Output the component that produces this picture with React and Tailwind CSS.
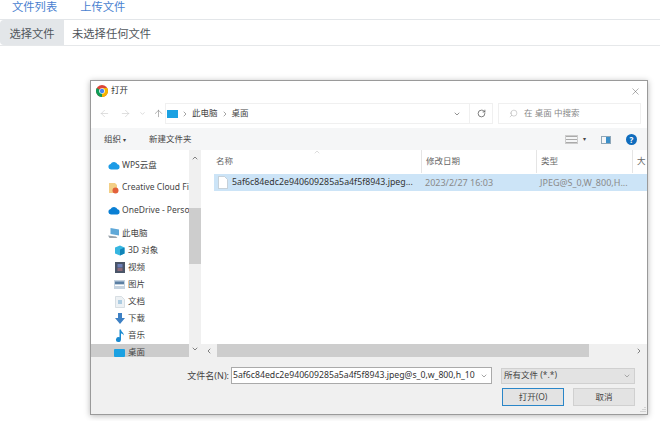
import React from 'react';
import { ArrowLeft, ArrowRight, ArrowUp, ChevronDown, ChevronUp, ChevronLeft, ChevronRight, RotateCw, Search, X } from 'lucide-react';

const font = "font-['Noto_Sans','Noto_Sans_CJK_SC',sans-serif]";

const ChromeIcon = () => (
  <svg width="12" height="12" viewBox="0 0 24 24">
    <circle cx="12" cy="12" r="12" fill="#db4437" />
    <path d="M12 12 L1.6 6 A12 12 0 0 0 12 24 L18 13.5 Z" fill="#0f9d58" />
    <path d="M12 12 L12 24 A12 12 0 0 0 22.4 6 L12 6 Z" fill="#f4b400" />
    <circle cx="12" cy="12" r="5.6" fill="#fff" />
    <circle cx="12" cy="12" r="4.4" fill="#4285f4" />
  </svg>
);

const Cloud = ({ color = '#0a7fd4' }) => (
  <svg width="12" height="9" viewBox="0 0 24 16">
    <path d="M6 16a5.5 5.5 0 0 1-.8-10.9A7.5 7.5 0 0 1 19 5.6 5.3 5.3 0 0 1 19 16Z" fill={color} />
  </svg>
);

const Folder = () => (
  <svg width="11" height="13" viewBox="0 0 22 26">
    <path d="M2 4h12l4 4v16H2Z" fill="#f3cf86" />
    <circle cx="15" cy="19" r="6" fill="#e2603b" />
  </svg>
);

const PcIcon = () => (
  <svg width="13" height="12" viewBox="0 0 26 24">
    <path d="M7 2l17 3v12L7 14Z" fill="#5fa8d8" />
    <path d="M2 17l16 2 3 3H5Z" fill="#9aa3ab" />
  </svg>
);

const Cube = () => (
  <svg width="11" height="11" viewBox="0 0 22 22">
    <path d="M2 5l10-4 9 4v12l-9 4-10-4Z" fill="#37b6e0" />
    <path d="M12 9l9-4v12l-9 4Z" fill="#1184b8" />
  </svg>
);

const Film = () => (
  <svg width="10" height="11" viewBox="0 0 20 22">
    <rect width="20" height="22" fill="#4a5568" />
    <rect x="5" y="4" width="10" height="7" fill="#6d7fb8" />
    <rect x="5" y="12" width="10" height="6" fill="#8d6a78" />
  </svg>
);

const Pic = () => (
  <svg width="11" height="9" viewBox="0 0 22 18">
    <rect width="22" height="18" fill="#c5d3e0" />
    <rect x="2" y="3" width="18" height="5" fill="#5b7fa3" />
    <rect x="2" y="10" width="18" height="2" fill="#fff" />
  </svg>
);

const Doc = () => (
  <svg width="10" height="12" viewBox="0 0 20 24">
    <path d="M1 1h12l6 6v16H1Z" fill="#edf1f4" stroke="#b9c4cc" />
    <path d="M6 10h8M6 14h8" stroke="#6da7cf" strokeWidth="2" />
  </svg>
);

const Down = () => (
  <svg width="10" height="11" viewBox="0 0 20 22">
    <path d="M6 0h8v10h6L10 22 0 10h6Z" fill="#3d80c4" />
  </svg>
);

const Music = () => (
  <svg width="10" height="13" viewBox="0 0 20 26">
    <path d="M9 1h3c0 5 6 6 6 12-2-3-4-4-6-4v12a5 5 0 1 1-3-4.500Z" fill="#1a8ad0" />
  </svg>
);

const Desk = () => <span className="w-[11px] h-[8px] bg-[#1ba1e2] rounded-[1px] block" />;

const FileIcon = () => (
  <svg width="10" height="13" viewBox="0 0 20 26">
    <path d="M1 1h12l6 6v18H1Z" fill="#fff" stroke="#a9b0b6" />
  </svg>
);

const navItems = [
  { label: 'WPS云盘', icon: <Cloud color="#1c9be6" />, cls: 'pl-[16px] h-[26px] pt-[5px]' },
  { label: 'Creative Cloud Fi', icon: <Folder />, cls: 'pl-[16px] h-[23px]' },
  { label: 'OneDrive - Perso', icon: <Cloud />, cls: 'pl-[16px] h-[23px]' },
  { label: '此电脑', icon: <PcIcon />, cls: 'pl-[16px] h-[20px] pt-[2px]' },
  { label: '3D 对象', icon: <Cube />, cls: 'pl-[22px] h-[17px]' },
  { label: '视频', icon: <Film />, cls: 'pl-[22px] h-[17px]' },
  { label: '图片', icon: <Pic />, cls: 'pl-[22px] h-[17px]' },
  { label: '文档', icon: <Doc />, cls: 'pl-[22px] h-[17px]' },
  { label: '下载', icon: <Down />, cls: 'pl-[22px] h-[17px]' },
  { label: '音乐', icon: <Music />, cls: 'pl-[22px] h-[17px]' },
  { label: '桌面', icon: <Desk />, cls: 'pl-[22px] h-[17px] bg-[#cccccc]' },
];

const columns = [
  { label: '名称', w: 'w-[220px] pl-[15px]' },
  { label: '修改日期', w: 'w-[115px] pl-[4px] border-l border-[#e5e5e5]' },
  { label: '类型', w: 'w-[96px] pl-[4px] border-l border-[#e5e5e5]' },
  { label: '大', w: 'flex-1 pl-[4px] border-l border-[#e5e5e5]' },
];

export default function App() {
  return (
    <div className={`w-[660px] h-[421px] bg-white overflow-hidden ${font}`}>
      {/* page tabs */}
      <div className="flex h-[20px] items-center gap-[23px] pl-[12px] pb-[6px] border-b border-[#e3e6e9] text-[11.3px] leading-none text-[#4a7fd0]">
        <span>文件列表</span>
        <span>上传文件</span>
      </div>
      {/* file input */}
      <div className="flex h-[26px] items-center border-b border-[#e6e8ea] text-[11.3px] text-[#50565c]">
        <div className="w-[64px] h-full pt-[3px] bg-[#e3e6e9] rounded-l-[4px] flex items-center justify-center">选择文件</div>
        <span className="pl-[8px] pt-[3px]">未选择任何文件</span>
      </div>
      {/* dialog */}
      <div className="ml-[90px] mt-[34px] w-[558px] h-[335px] flex flex-col bg-white border border-[#9a9a9a] shadow-[0_1px_6px_rgba(0,0,0,0.28)] text-[8.5px] text-[#555]">
        <div className="h-[19px] shrink-0 flex items-center pl-[5px] pr-[6px] text-[#333]">
          <ChromeIcon />
          <span className="ml-[3px] flex-1">打开</span>
          <X size={11} strokeWidth={1} className="text-[#555] mt-[1px]" />
        </div>
        <div className="h-[28px] shrink-0 flex items-center pb-[1px]">
          <div className="w-[74px] flex items-center pl-[8px] text-[#c4c4c4] gap-[10px]">
            <ArrowLeft size={11} strokeWidth={1.2} />
            <ArrowRight size={11} strokeWidth={1.2} />
            <ChevronDown size={7} className="-mx-[2px]" />
            <ArrowUp size={11} strokeWidth={1.2} className="text-[#777] -ml-[1px]" />
          </div>
          <div className="w-[305px] h-[21px] flex items-center pl-[1px] gap-[3px] border border-[#f0f0f0] text-[#444]">
            <span className="w-[11px] h-[8px] bg-[#1ba1e2] block" />
            <ChevronRight size={8} className="text-[#777]" />
            <span>此电脑</span>
            <ChevronRight size={8} className="text-[#777]" />
            <span>桌面</span>
            <span className="flex-1" />
            <ChevronDown size={8} strokeWidth={2.4} className="text-[#777] mr-[8px]" />
          </div>
          <div className="w-[23px] h-[21px] flex items-center justify-center border-y border-r border-[#f0f0f0] text-[#555]">
            <RotateCw size={9} strokeWidth={2} />
          </div>
          <div className="ml-[5px] w-[143px] h-[21px] flex items-center pl-[10px] gap-[6px] border border-[#f0f0f0] text-[#888]">
            <Search size={9} strokeWidth={1} className="-scale-x-100" />
            <span>在 桌面 中搜索</span>
          </div>
        </div>
        <div className="h-[22px] shrink-0 pt-[1px] bg-[#f5f6f7] flex items-center pl-[13px] pr-[10px] text-[#444]">
          <span className="w-[45px]">组织 <span className="text-[6px]">▾</span></span>
          <span className="flex-1">新建文件夹</span>
          <span className="w-[13px] h-[9px] border border-[#ccc] bg-[repeating-linear-gradient(180deg,#aaa_0,#aaa_1px,#f5f6f7_1px,#f5f6f7_3px)]" />
          <span className="ml-[5px] mr-[15px] text-[6px]">▾</span>
          <span className="w-[10px] h-[8px] border border-[#8fa7b8] flex justify-end"><span className="w-[4px] bg-[#3b8fc9] block" /></span>
          <span className="ml-[15px] w-[11px] h-[11px] rounded-full bg-[#0f6cbd] text-white text-[8px] leading-[11px] text-center font-bold">?</span>
        </div>
        <div className="flex-1 min-h-0 flex">
          {/* nav tree */}
          <div className="w-[98px] flex flex-col overflow-hidden text-[#444]">
            {navItems.map(item => (
              <div key={item.label} className={`${item.cls} flex items-center shrink-0`}>
                <span className="w-[13px] flex justify-center shrink-0">{item.icon}</span>
                <span className="ml-[2px] whitespace-nowrap">{item.label}</span>
              </div>
            ))}
          </div>
          <div className="w-[12px] bg-[#f0f0f0] flex flex-col items-center text-[#666] py-[4px]">
            <ChevronUp size={8} strokeWidth={2.4} />
            <span className="w-full h-[56px] mt-[46px] bg-[#cdcdcd]" />
            <ChevronDown size={8} strokeWidth={2.4} className="mt-auto" />
          </div>
          {/* files */}
          <div className="flex-1 min-w-0 flex flex-col">
            <div className="h-[23px] shrink-0 flex items-center text-[#666] relative">
              <ChevronUp size={8} strokeWidth={1} className="absolute left-[112px] -top-[2px] text-[#999]" />
              {columns.map(col => (
                <div key={col.label} className={`${col.w} h-full flex items-center overflow-hidden whitespace-nowrap`}>{col.label}</div>
              ))}
            </div>
            <div className="h-[17px] mt-[1px] shrink-0 ml-[13px] bg-[#cce4f7] flex items-center overflow-hidden whitespace-nowrap">
              <span className="ml-[4px]"><FileIcon /></span>
              <span className="ml-[4px] w-[193px] text-[#333] text-[8.8px]">5af6c84edc2e940609285a5a4f5f8943.jpeg...</span>
              <span className="w-[115px] text-[#8a8a8a] text-[9px]">2023/2/27 16:03</span>
              <span className="text-[#8a8a8a] text-[9px]">JPEG@S_0,W_800,H...</span>
            </div>
            <div className="flex-1" />
            <div className="h-[13px] shrink-0 bg-[#f0f0f0] flex items-center text-[#666]">
              <ChevronLeft size={8} strokeWidth={2.4} className="mx-[4px] shrink-0" />
              <span className="w-[372px] h-full bg-[#cdcdcd]" />
              <span className="flex-1" />
              <ChevronRight size={8} strokeWidth={2.4} className="mr-[4px]" />
            </div>
          </div>
        </div>
        {/* footer */}
        <div className="h-[57px] shrink-0 bg-[#f0f0f0] flex flex-col text-[#444] relative">
          <div className="h-[19px] mt-[9px] flex items-center">
            <span className="w-[138px] text-right text-[9px]">文件名(N):</span>
            <div className="ml-[2px] w-[261px] h-[17px] bg-white border border-[#aaa] flex items-center pl-[1px] whitespace-nowrap text-[#333]">
              <span className="flex-1 text-[8.7px]">5af6c84edc2e940609285a5a4f5f8943.jpeg@s_0,w_800,h_10</span>
              <ChevronDown size={8} className="mx-[3px] shrink-0 text-[#777]" />
            </div>
            <div className="ml-[9px] w-[134px] h-[16px] bg-[#e3e3e3] border border-[#d0d0d0] flex items-center pl-[2px]">
              <span className="flex-1">所有文件 (*.*)</span>
              <ChevronDown size={8} className="mr-[3px] text-[#888]" />
            </div>
          </div>
          <div className="mt-[3px] ml-[411px] flex gap-[9px]">
            <div className="w-[62px] h-[18px] bg-[#e3e3e3] border border-[#2a86c8] flex items-center justify-center">打开(O)</div>
            <div className="w-[62px] h-[18px] bg-[#e3e3e3] border border-[#d0d0d0] flex items-center justify-center">取消</div>
          </div>
          <svg width="7" height="7" viewBox="0 0 7 7" className="absolute right-[1px] bottom-[1px]">
            <path d="M6 1v1M4 3v1M6 3v1M2 5v1M4 5v1M6 5v1" stroke="#b5b5b5" />
          </svg>
        </div>
      </div>
    </div>
  );
}
